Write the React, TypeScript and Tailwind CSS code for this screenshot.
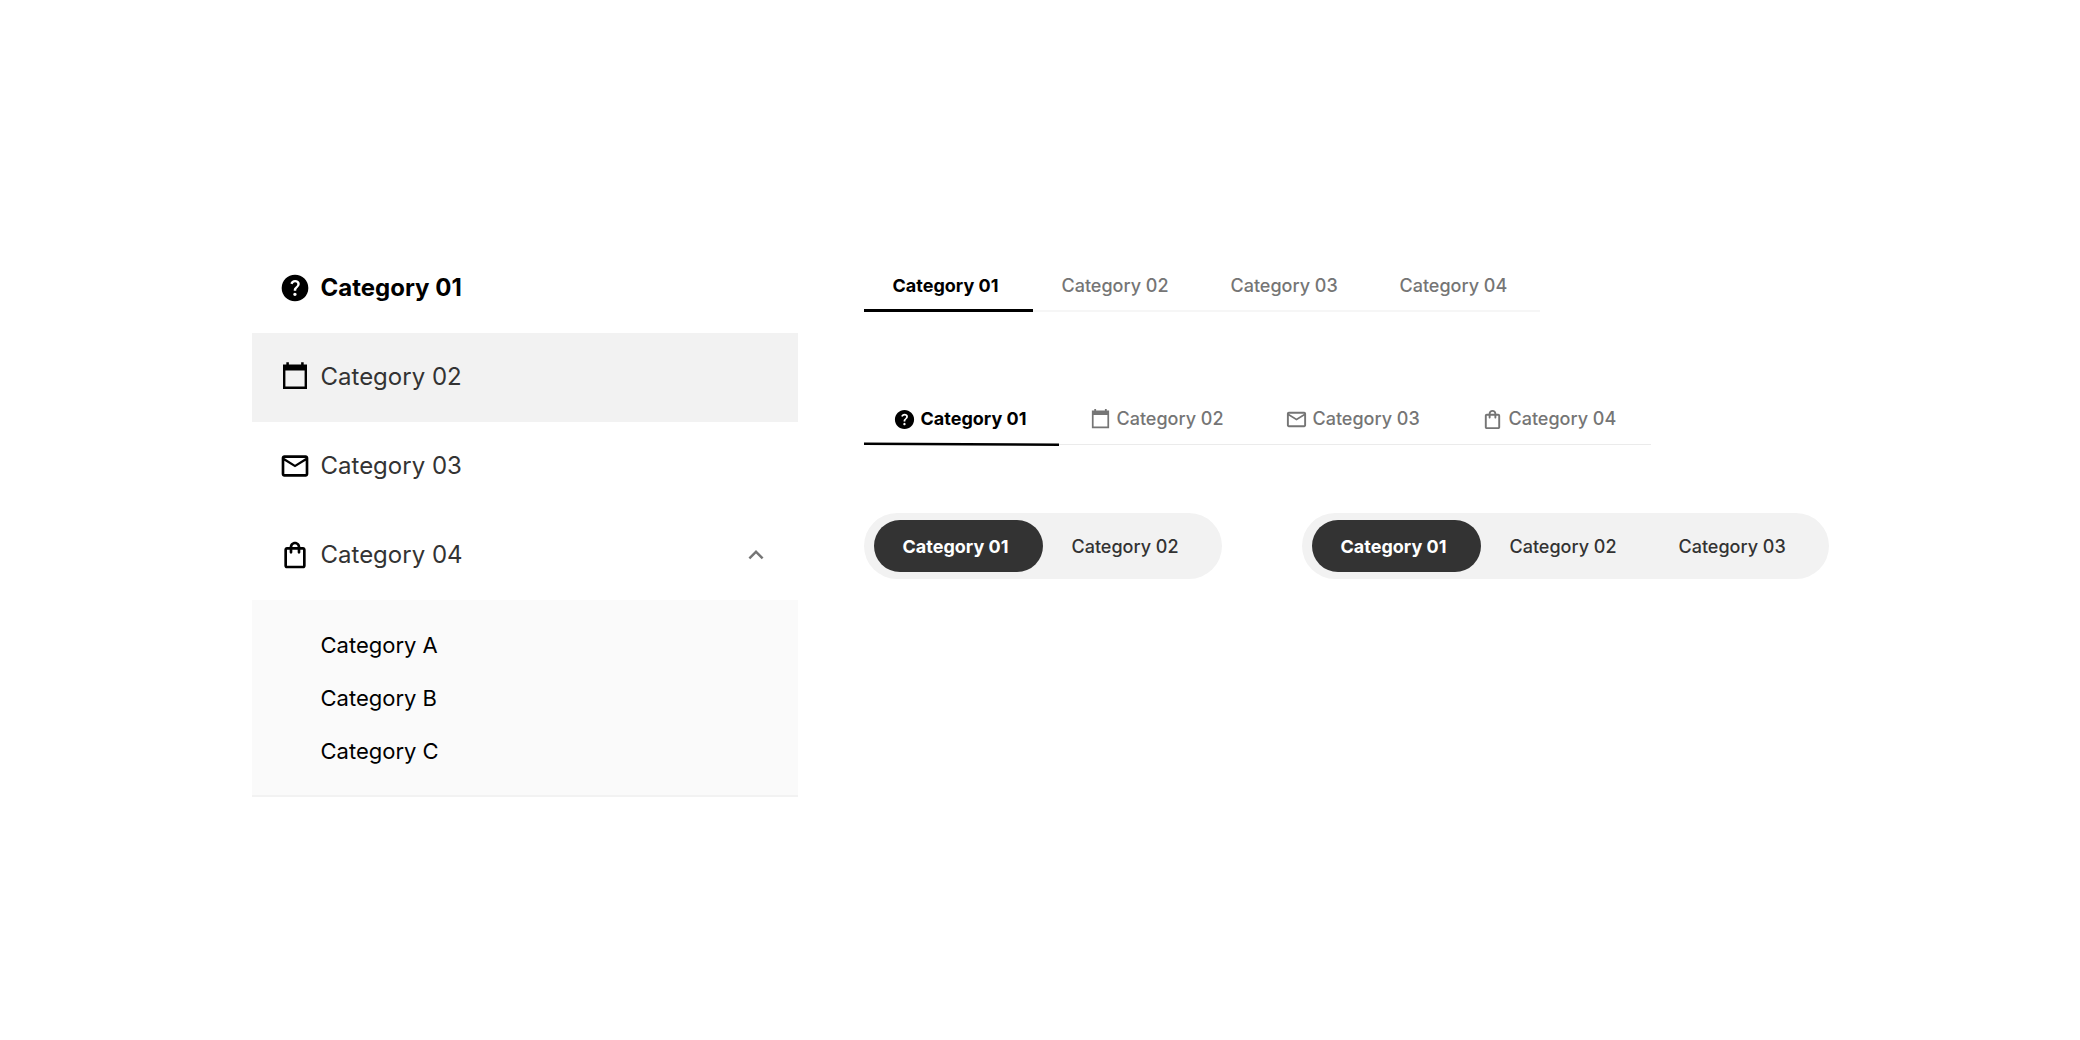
import type { ReactNode } from "react"
import { MdExpandLess, MdOutlineEmail, MdOutlineShoppingBag } from "react-icons/md"

function HelpIcon({ className }: { className?: string }) {
  return (
    <svg viewBox="0 -960 960 960" fill="currentColor" className={className} aria-hidden="true">
      <path d="M478-240q21 0 35.5-14.5T528-290q0-21-14.5-35.5T478-340q-21 0-35.5 14.5T428-290q0 21 14.5 35.5T478-240Zm-36-154h74q0-33 7.5-52t42.5-52q26-26 41-49.5t15-56.5q0-56-41-86t-97-30q-57 0-92.5 30T342-618l66 26q5-18 22.5-39t53.5-21q32 0 48 17.5t16 38.5q0 20-12 37.5T506-526q-44 39-54 59t-10 73Zm38 314q-83 0-156-31.5T197-197q-54-54-85.5-127T80-480q0-83 31.5-156T197-763q54-54 127-85.5T480-880q83 0 156 31.5T763-763q54 54 85.5 127T880-480q0 83-31.5 156T763-197q-54 54-127 85.5T480-80Z" />
    </svg>
  )
}

function CalendarIcon({ className }: { className?: string }) {
  return (
    <svg viewBox="0 0 24 24" fill="currentColor" className={className} aria-hidden="true">
      <path d="M16.6 1v1.7H7.4V1H5.5v1.7H3V21h18V2.7h-2.5V1zM4.8 7.2h14.4v12H4.8z" />
    </svg>
  )
}

const categories = [
  { label: "Category 01", Icon: HelpIcon },
  { label: "Category 02", Icon: CalendarIcon },
  { label: "Category 03", Icon: MdOutlineEmail },
  { label: "Category 04", Icon: MdOutlineShoppingBag },
]

const subCategories = ["Category A", "Category B", "Category C"]

function SideMenu() {
  return (
    <nav className="w-[546px] min-w-0">
      {categories.map(({ label, Icon }, i) => (
        <button
          type="button"
          key={label}
          className={`flex h-[89px] w-full items-center gap-[10px] px-[27px] text-2xl ${
            i === 0 ? "font-bold text-black" : "text-[#333333]"
          } ${i === 1 ? "bg-[#f2f2f2]" : ""}`}
          aria-expanded={i === 3 ? true : undefined}
        >
          <Icon className="size-[32px] shrink-0 text-black" />
          {label}
          {i === 3 && <MdExpandLess className="ml-auto size-[30px] text-[#757575]" />}
        </button>
      ))}
      <ul className="flex flex-col gap-[23px] border-b-2 border-[#f2f2f2] bg-[#fafafa] pt-[30px] pb-[29px] pl-[69px] text-[22px] leading-[30px]">
        {subCategories.map((label) => (
          <li key={label}>
            <a className="text-black" href="#">
              {label}
            </a>
          </li>
        ))}
      </ul>
    </nav>
  )
}

function TextTabs() {
  return (
    <div role="tablist" className="flex w-fit shadow-[inset_0_-2px_#f6f6f6]">
      {categories.map(({ label }, i) => (
        <button
          type="button"
          role="tab"
          aria-selected={i === 0}
          key={label}
          className={`h-[52px] w-[169px] px-[29px] text-left text-lg whitespace-nowrap ${
            i === 0
              ? "font-bold text-black shadow-[inset_0_-3px_#000]"
              : "font-medium text-[#757575]"
          }`}
        >
          {label}
        </button>
      ))}
    </div>
  )
}

function IconTabs() {
  return (
    <div role="tablist" className="flex w-fit pr-[3px] shadow-[inset_0_-1px_#ebebeb]">
      {categories.map(({ label, Icon }, i) => (
        <button
          type="button"
          role="tab"
          aria-selected={i === 0}
          key={label}
          className={`relative flex h-[51px] w-[196px] items-center gap-[5px] pl-[29px] text-lg whitespace-nowrap ${
            i === 0 ? "font-bold text-black" : "font-medium text-[#757575]"
          }`}
        >
          <Icon className="size-[23px] shrink-0" />
          {label}
          {i === 0 && (
            <svg
              viewBox="0 0 195 4"
              className="absolute -bottom-px left-0 h-1 w-[195px]"
              aria-hidden="true"
            >
              <path d="M0 1.7 195 2.7" stroke="#000" strokeWidth="2.5" />
            </svg>
          )}
        </button>
      ))}
    </div>
  )
}

function PillTabs({ children }: { children: ReactNode }) {
  return (
    <div role="tablist" className="flex rounded-full bg-[#f2f2f2] px-[10px] py-[7px]">
      {children}
    </div>
  )
}

function Pill({ label, active }: { label: string; active?: boolean }) {
  return (
    <button
      type="button"
      role="tab"
      aria-selected={!!active}
      className={`h-[52px] w-[169px] rounded-full px-[29px] pt-[2px] text-left text-lg whitespace-nowrap ${
        active ? "bg-[#333333] font-bold text-white" : "font-medium text-[#333333]"
      }`}
    >
      {label}
    </button>
  )
}

export default function App() {
  return (
    <main className="flex min-h-screen items-center justify-center gap-[66px] bg-white font-['Inter',sans-serif]">
      <SideMenu />
      <div className="flex flex-col gap-[67px] self-stretch justify-center">
        <div className="flex h-[553px] flex-col pt-4">
          <TextTabs />
          <div className="mt-[82px]">
            <IconTabs />
          </div>
          <div className="mt-[68px] flex gap-20">
            <PillTabs>
              <Pill label="Category 01" active />
              <Pill label="Category 02" />
            </PillTabs>
            <PillTabs>
              <Pill label="Category 01" active />
              <Pill label="Category 02" />
              <Pill label="Category 03" />
            </PillTabs>
          </div>
        </div>
      </div>
    </main>
  )
}
